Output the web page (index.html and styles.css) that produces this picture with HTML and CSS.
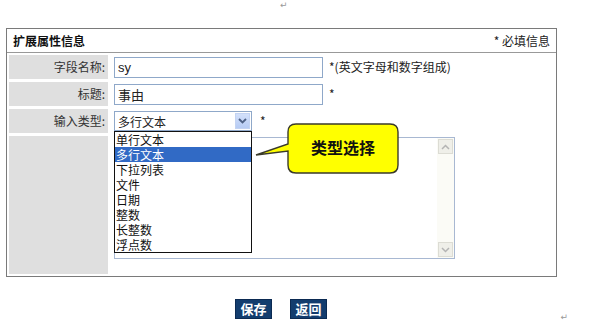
FILE: index.html
```html
<!DOCTYPE html>
<html lang="zh">
<head>
    <meta charset="UTF-8">
    <title>扩展属性信息</title>
    <link rel="stylesheet" href="styles.css">
</head>
<body>
    <div class="mark-top"><span class="pmark">↵</span></div>

    <div class="panel">
        <div class="panel-head">
            <span class="title">扩展属性信息</span>
            <span class="required">* 必填信息</span>
        </div>
        <div class="form-grid">
            <div class="label">字段名称:</div>
            <div class="value">
                <input class="text" type="text" value="sy">
                <span class="hint">*(英文字母和数字组成)</span>
            </div>

            <div class="label">标题:</div>
            <div class="value">
                <input class="text" type="text" value="事由">
                <span class="hint">*</span>
            </div>

            <div class="label">输入类型:</div>
            <div class="value">
                <div class="select">
                    <span class="select-text">多行文本</span>
                    <span class="select-btn">
                        <svg width="9" height="6" viewBox="0 0 9 6"><path d="M1 1 L4.5 4.5 L8 1" fill="none" stroke="#4d6185" stroke-width="1.8"/></svg>
                    </span>
                    <ul class="options">
                        <li>单行文本</li>
                        <li class="active">多行文本</li>
                        <li>下拉列表</li>
                        <li>文件</li>
                        <li>日期</li>
                        <li>整数</li>
                        <li>长整数</li>
                        <li>浮点数</li>
                    </ul>
                </div>
                <span class="hint star">*</span>
            </div>

            <div class="label"></div>
            <div class="value">
                <div class="area">
                    <textarea></textarea>
                    <div class="scroll">
                        <span class="scroll-btn">
                            <svg width="9" height="6" viewBox="0 0 9 6"><path d="M1 5 L4.5 1.5 L8 5" fill="none" stroke="#b4b4b4" stroke-width="1.5"/></svg>
                        </span>
                        <span class="scroll-btn">
                            <svg width="9" height="6" viewBox="0 0 9 6"><path d="M1 1 L4.5 4.5 L8 1" fill="none" stroke="#b4b4b4" stroke-width="1.5"/></svg>
                        </span>
                    </div>
                </div>
            </div>
        </div>

        <div class="callout">
            <svg width="146" height="52" viewBox="0 0 146 52">
                <path d="M41,1 H135 Q143,1 143,9 V42 Q143,50 135,50 H41 Q33,50 33,42 V28 L1,32 L33,21 V9 Q33,1 41,1 Z"
                      fill="#ffff00" stroke="#3a3a2a" stroke-width="1.4"/>
                <text x="88" y="24" text-anchor="middle" dominant-baseline="central" class="callout-text">类型选择</text>
            </svg>
        </div>
    </div>

    <div class="actions">
        <button class="btn">保存</button>
        <button class="btn">返回</button>
        <span class="pmark end">↵</span>
    </div>
</body>
</html>
```

FILE: styles.css
```css
/* page */
body {
    margin: 0;
    width: 594px;
    background-color: #fff;
    font-family: "Noto Sans CJK SC", "Liberation Sans", sans-serif;
    font-size: 12px;
    color: #333;
}
.mark-top {
    height: 28px;
    padding-left: 280px;
    box-sizing: border-box;
}
.pmark {
    font-family: "DejaVu Sans", sans-serif;
    font-size: 9px;
    color: #999;
    line-height: 10px;
    display: block;
}

/* panel */
.panel {
    position: relative;
    margin-left: 6px;
    width: 549px;
    border: 1px solid #7a7a7a;
}
.panel-head {
    height: 23px;
    border-bottom: 1px solid #999;
    display: flex;
    align-items: center;
    justify-content: space-between;
    padding: 0 6px;
}
.title {
    font-weight: bold;
    color: #111;
}
.required {
    color: #222;
}

.form-grid {
    display: grid;
    grid-template-columns: 99px 443px;
    grid-template-rows: 24px 24px 24px 138px;
    gap: 3px;
    padding: 2px;
}
.label {
    background-color: #dfdfdf;
    text-align: right;
    padding-right: 3px;
    line-height: 24px;
    color: #333;
}
.value {
    display: flex;
    align-items: flex-start;
    padding-left: 3px;
    padding-top: 2px;
}
.text {
    width: 209px;
    height: 21px;
    box-sizing: border-box;
    border: 1px solid #8fa8c9;
    padding: 0 3px;
    margin: 0;
    font-family: "Liberation Sans", "Noto Sans CJK SC", sans-serif;
    font-size: 13px;
    color: #222;
    outline: none;
}
.hint {
    margin-left: 6px;
    line-height: 20px;
    color: #222;
}
.hint.star {
    margin-left: 8px;
}

/* fake select */
.select {
    position: relative;
    width: 138px;
    height: 20px;
    box-sizing: border-box;
    border: 1px solid #8fa8c9;
    display: flex;
    align-items: center;
    justify-content: space-between;
    padding-left: 3px;
    padding-right: 1px;
}
.select-text {
    color: #222;
}
.select-btn {
    width: 15px;
    height: 16px;
    background: linear-gradient(#d3e0fa, #b6cbf4);
    border: 1px solid #c3d3f2;
    box-sizing: border-box;
    display: flex;
    align-items: center;
    justify-content: center;
}
.options {
    position: absolute;
    top: 19px;
    left: -1px;
    width: 138px;
    margin: 0;
    padding: 0;
    list-style: none;
    background-color: #fff;
    border: 1px solid #111;
    box-sizing: border-box;
    z-index: 2;
}
.options li {
    height: 15px;
    line-height: 15px;
    padding-left: 1px;
    font-size: 12px;
    color: #111;
}
.options li.active {
    background-color: #316ac5;
    color: #fff;
}

/* textarea with old style scrollbar */
.value .area {
    margin-top: -1px;
}
.area {
    width: 341px;
    height: 122px;
    box-sizing: border-box;
    border: 1px solid #a8b8d2;
    display: flex;
}
.area textarea {
    flex: 1;
    border: none;
    resize: none;
    outline: none;
    overflow: hidden;
    margin: 0;
}
.scroll {
    width: 17px;
    background-color: #fbfbf6;
    display: flex;
    flex-direction: column;
    justify-content: space-between;
    padding: 1px;
    box-sizing: border-box;
}
.scroll-btn {
    height: 15px;
    background-color: #efefe9;
    border: 1px solid #dcdcd4;
    box-sizing: border-box;
    display: flex;
    align-items: center;
    justify-content: center;
}

/* yellow callout */
.callout {
    position: absolute;
    left: 248px;
    top: 94px;
    z-index: 3;
}
.callout svg {
    display: block;
}
.callout-text {
    font-family: "Noto Sans CJK SC", sans-serif;
    font-size: 16px;
    font-weight: bold;
    fill: #111;
}

/* buttons */
.actions {
    display: flex;
    align-items: flex-start;
    margin-top: 22px;
    padding-left: 235px;
    padding-right: 26px;
}
.btn {
    width: 37px;
    height: 20px;
    margin: 0 18px 0 0;
    padding: 0;
    background-color: #133d6e;
    border: 1px solid #0b2a52;
    color: #fff;
    font-family: "Noto Sans CJK SC", sans-serif;
    font-size: 13px;
    font-weight: bold;
    line-height: 18px;
}
.pmark.end {
    margin-left: auto;
    margin-top: 13px;
}
```
